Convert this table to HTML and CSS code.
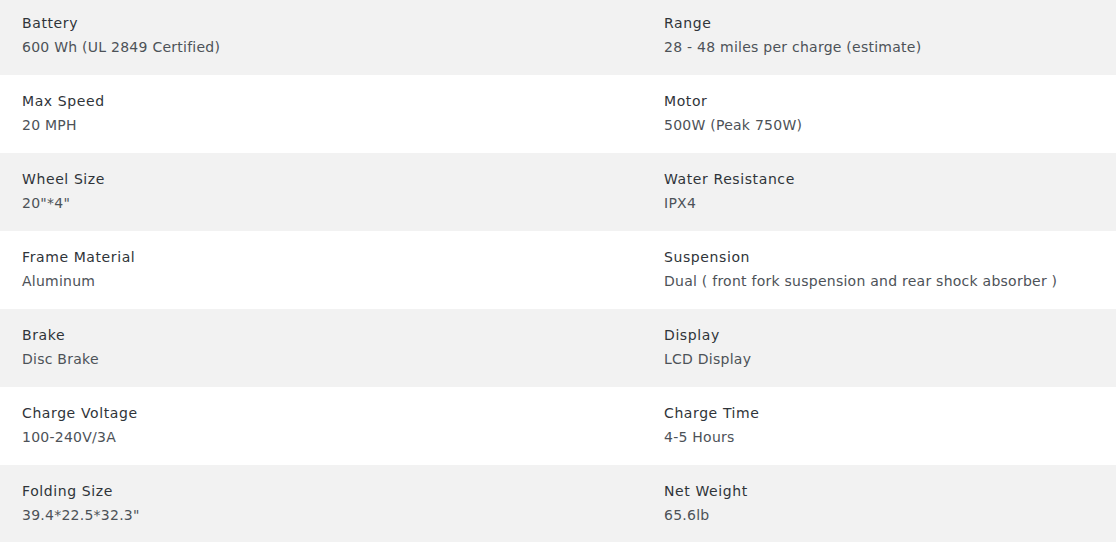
FILE: index.html
```html
<!DOCTYPE html>
<html>
<head>
<meta charset="utf-8">
<link rel="stylesheet" href="styles.css">
</head>
<body>
<div class="specs">
  <div class="row">
    <div class="cell"><div class="label">Battery</div><div class="value">600 Wh (UL 2849 Certified)</div></div>
    <div class="cell"><div class="label">Range</div><div class="value">28 - 48 miles per charge (estimate)</div></div>
  </div>
  <div class="row">
    <div class="cell"><div class="label">Max Speed</div><div class="value">20 MPH</div></div>
    <div class="cell"><div class="label">Motor</div><div class="value">500W (Peak 750W)</div></div>
  </div>
  <div class="row">
    <div class="cell"><div class="label">Wheel Size</div><div class="value">20"*4"</div></div>
    <div class="cell"><div class="label">Water Resistance</div><div class="value">IPX4</div></div>
  </div>
  <div class="row">
    <div class="cell"><div class="label">Frame Material</div><div class="value">Aluminum</div></div>
    <div class="cell"><div class="label">Suspension</div><div class="value">Dual ( front fork suspension and rear shock absorber )</div></div>
  </div>
  <div class="row">
    <div class="cell"><div class="label">Brake</div><div class="value">Disc Brake</div></div>
    <div class="cell"><div class="label">Display</div><div class="value">LCD Display</div></div>
  </div>
  <div class="row">
    <div class="cell"><div class="label">Charge Voltage</div><div class="value">100-240V/3A</div></div>
    <div class="cell"><div class="label">Charge Time</div><div class="value">4-5 Hours</div></div>
  </div>
  <div class="row">
    <div class="cell"><div class="label">Folding Size</div><div class="value">39.4*22.5*32.3"</div></div>
    <div class="cell"><div class="label">Net Weight</div><div class="value">65.6lb</div></div>
  </div>
</div>
</body>
</html>
```

FILE: styles.css
```css
html, body {
  margin: 0;
  padding: 0;
  background: #ffffff;
}
body {
  font-family: "DejaVu Sans", "Liberation Sans", sans-serif;
  overflow: hidden;
}
.specs {
  display: flex;
  flex-direction: column;
}
.row {
  display: grid;
  grid-template-columns: 642px 1fr;
  padding: 14px 0 16px 22px;
  height: 78px;
  box-sizing: border-box;
}
.row:nth-child(odd) {
  background: #f2f2f2;
}
.row:first-child {
  height: 75px;
  padding-top: 11px;
}
.label {
  font-size: 14px;
  letter-spacing: 0.6px;
  line-height: 24px;
  color: #2f3439;
}
.value {
  font-size: 14px;
  letter-spacing: 0.25px;
  line-height: 24px;
  color: #4d5258;
}
```
